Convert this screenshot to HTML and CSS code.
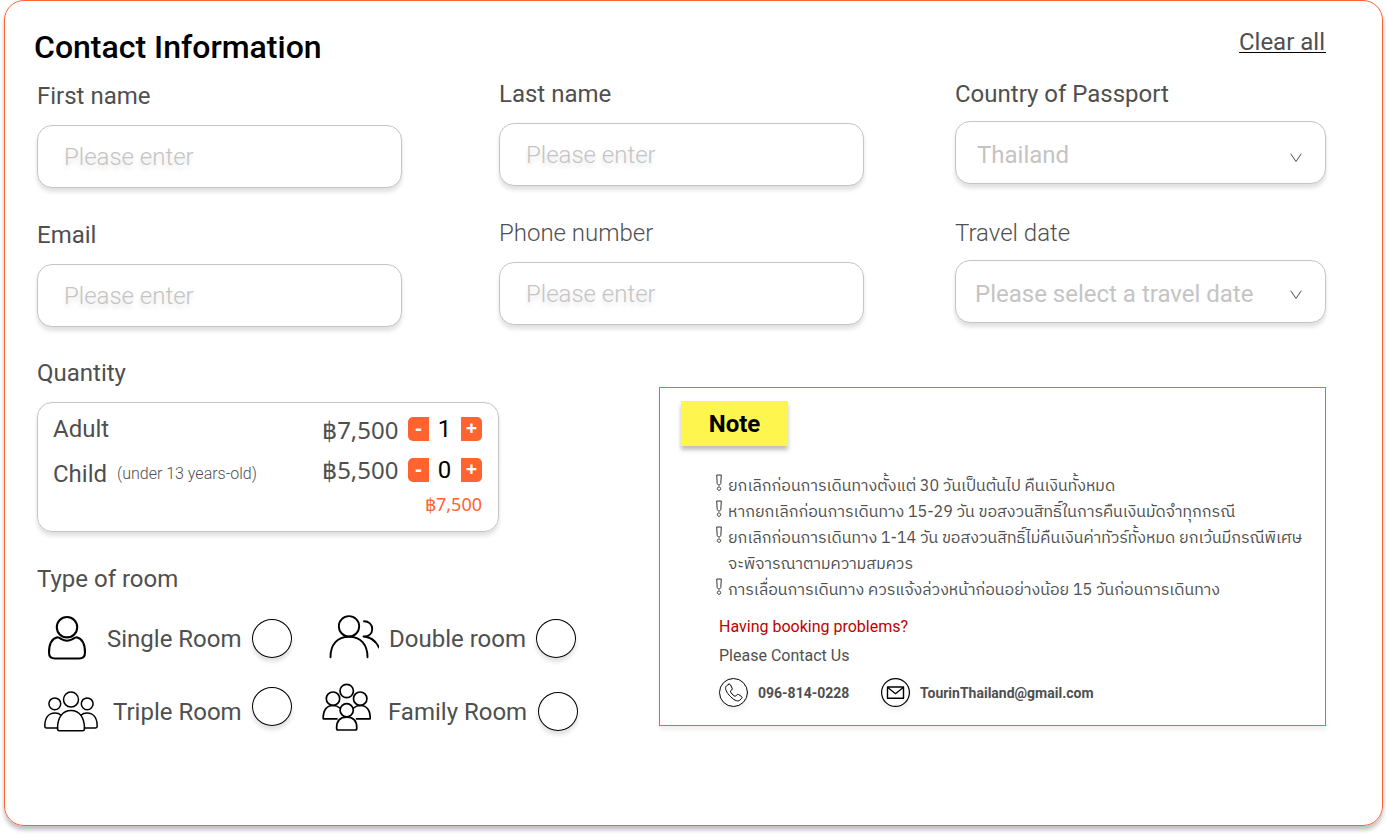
FILE: index.html
```html
<!DOCTYPE html>
<html lang="en">
<head>
<meta charset="utf-8">
<title>Contact Information</title>
<link rel="stylesheet" href="styles.css">
</head>
<body>
<main class="card">
  <header class="head">
    <h1 class="title">Contact Information</h1>
    <a class="clear">Clear all</a>
  </header>

  <section class="fields">
    <div class="col col-first">
      <div class="field"><span class="label">First name</span><div class="input"><span class="ph">Please enter</span></div></div>
      <div class="field"><span class="label">Email</span><div class="input"><span class="ph">Please enter</span></div></div>
    </div>
    <div class="col col-second">
      <div class="field"><span class="label">Last name</span><div class="input"><span class="ph">Please enter</span></div></div>
      <div class="field"><span class="label light">Phone number</span><div class="input"><span class="ph">Please enter</span></div></div>
    </div>
    <div class="col col-third">
      <div class="field"><span class="label">Country of Passport</span><div class="input select country"><span>Thailand</span><svg class="chev" viewBox="0 0 12 10"><path d="M.7.7 6 8.5 11.3.7"/></svg></div></div>
      <div class="field"><span class="label light">Travel date</span><div class="input select"><span>Please select a travel date</span><svg class="chev" viewBox="0 0 12 10"><path d="M.7.7 6 8.5 11.3.7"/></svg></div></div>
    </div>
  </section>

  <section class="lower">
    <div class="left">
      <span class="label">Quantity</span>
      <div class="quantity">
        <div class="qrow adult">
          <span class="who">Adult</span>
          <span class="price">฿7,500</span>
          <span class="btn minus">-</span><span class="num">1</span><span class="btn plus">+</span>
        </div>
        <div class="qrow child">
          <span class="who">Child</span><span class="age">(under 13 years-old)</span>
          <span class="price">฿5,500</span>
          <span class="btn minus">-</span><span class="num">0</span><span class="btn plus">+</span>
        </div>
        <div class="total">฿7,500</div>
      </div>

      <span class="label">Type of room</span>
      <div class="rooms">
        <div class="room single">
          <svg class="icon" width="42" height="46" viewBox="0 0 42 46"><g stroke-width="2.1"><circle cx="21" cy="12.2" r="10.2"/><path d="M11.500 22.200C6 23.500 3 29.500 3 37.500c0 4 2 6 6 6h24c4 0 6-2 6-6 0-8-3-14-8.500-15.300-1.500 0-2.500 1-4 2-3.500 2-7.500 2-11 0-1.500-1-2.500-2-4-2z"/></g></svg>
          <span class="name">Single Room</span><span class="radio"></span>
        </div>
        <div class="room double">
          <svg class="icon" width="51" height="46" viewBox="0 0 51 46"><g stroke-width="1.9"><circle cx="21" cy="12.300" r="10.200"/><path d="M2.500 43.300c0-13 7-20.500 18.500-20.500s18.500 7.500 18.500 20.500"/><path d="M36 7.200c4.800 0 8.200 3.300 8.200 7.700 0 4.600-3.400 7.600-8.700 7.600 8 .5 12.500 4.500 15.500 11"/></g></svg>
          <span class="name">Double room</span><span class="radio"></span>
        </div>
        <div class="room triple">
          <svg class="icon" width="54" height="44" viewBox="0 0 54 44"><g stroke-width="1.500"><circle cx="10.800" cy="13.800" r="5.900"/><circle cx="43.200" cy="13.800" r="5.900"/><circle cx="27" cy="9.600" r="7.500"/><path d="M13.700 38H2.500c-1 0-1.700-.6-1.700-1.700C.8 28 4.500 23 11 23c2.500 0 4.500.7 6 2.200"/><path d="M40.300 38h11.200c1 0 1.700-.6 1.700-1.700C53.200 28 49.500 23 43 23c-2.500 0-4.500.7-6 2.200"/><path d="M13.500 38.800c0-11.500 5-18.300 13.500-18.300s13.500 6.800 13.500 18.300c0 1.200-.8 2-2 2h-23c-1.200 0-2-.8-2-2z"/></g></svg>
          <span class="name">Triple Room</span><span class="radio"></span>
        </div>
        <div class="room family">
          <svg class="icon" width="50" height="50" viewBox="0 0 50 50"><g stroke-width="1.700"><circle cx="24.700" cy="8" r="6.700"/><circle cx="11" cy="15.700" r="6.700"/><circle cx="38.200" cy="15.700" r="6.700"/><circle cx="24.700" cy="27.300" r="6.600"/><path d="M15 35.800H1.200C1 27.500 4.500 22.500 11 22.500c2.800 0 5 .8 6.800 2.500"/><path d="M34.500 35.800h13.700c.2-8.300-3.300-13.300-9.800-13.300-2.800 0-5 .8-6.800 2.500"/><path d="M14.600 45c0-7 3.500-10.800 10.100-10.800S34.800 38 34.800 45c0 1.500-.3 2-1.500 2H16.100c-1.200 0-1.500-.5-1.500-2z"/></g></svg>
          <span class="name">Family Room</span><span class="radio"></span>
        </div>
      </div>
    </div>

    <aside class="note">
      <div class="badge">Note</div>
      <ul class="rules">
        <li><svg class="bang" viewBox="0 0 8 18"><path d="M1.700 1h4.600L5.800 9.500Q4 13 2.200 9.500zM4 12.900a1.700 1.700 0 1 0 .01 0z"/></svg><span>ยกเลิกก่อนการเดินทางตั้งแต่ 30 วันเป็นต้นไป คืนเงินทั้งหมด</span></li>
        <li><svg class="bang" viewBox="0 0 8 18"><path d="M1.700 1h4.600L5.800 9.500Q4 13 2.200 9.500zM4 12.900a1.700 1.700 0 1 0 .01 0z"/></svg><span>หากยกเลิกก่อนการเดินทาง 15-29 วัน ขอสงวนสิทธิ์ในการคืนเงินมัดจำทุกกรณี</span></li>
        <li><svg class="bang" viewBox="0 0 8 18"><path d="M1.700 1h4.600L5.800 9.500Q4 13 2.200 9.500zM4 12.900a1.700 1.700 0 1 0 .01 0z"/></svg><span>ยกเลิกก่อนการเดินทาง 1-14 วัน ขอสงวนสิทธิ์ไม่คืนเงินค่าทัวร์ทั้งหมด ยกเว้นมีกรณีพิเศษ</span></li>
        <li class="cont"><span>จะพิจารณาตามความสมควร</span></li>
        <li><svg class="bang" viewBox="0 0 8 18"><path d="M1.700 1h4.600L5.800 9.500Q4 13 2.200 9.500zM4 12.900a1.700 1.700 0 1 0 .01 0z"/></svg><span>การเลื่อนการเดินทาง ควรแจ้งล่วงหน้าก่อนอย่างน้อย 15 วันก่อนการเดินทาง</span></li>
      </ul>
      <div class="problems">Having booking problems?</div>
      <div class="please">Please Contact Us</div>
      <div class="contacts">
        <span class="disc"><svg class="icon" width="29" height="29" viewBox="0 0 29 29"><circle cx="14.500" cy="14.500" r="14" stroke-width="1"/><path stroke-width="1" d="M9.600 6.300 7.400 8c-1.700 1.600-.8 5 2.700 9.100 4 4.600 8.300 7 10.600 5.200l2-2c.5-.6.4-1.300-.2-1.800l-3-2c-.6-.4-1.300-.3-1.700.3l-1 1.200c-.5.400-1 .3-1.600-.1-1.500-1-2.700-2.300-3.600-3.900-.3-.6-.2-1.100.3-1.500l.9-.7c.6-.5.7-1 .3-1.700l-1.700-3.300c-.4-.8-1.100-1-1.800-.5z"/></svg></span>
        <span class="phone">096-814-0228</span>
        <span class="disc"><svg class="icon" width="29" height="29" viewBox="0 0 29 29"><circle cx="14.500" cy="14.500" r="13.900" stroke-width="1.200"/><rect x="6.500" y="9" width="16" height="11.300" stroke-width="1.400"/><path stroke-width="1.300" d="m6.800 9.500 7.700 6.200 7.700-6.200"/></svg></span>
        <span class="mail">TourinThailand@gmail.com</span>
      </div>
    </aside>
  </section>
</main>
</body>
</html>
```

FILE: styles.css
```css
* { box-sizing: border-box; }
body {
  margin: 0;
  min-height: 834px;
  background: #fff;
  font-family: Roboto, "Noto Sans", sans-serif;
  font-size: 24px;
  line-height: 28px;
  color: #4f4f4f;
}
.card {
  width: 1379px;
  height: 826px;
  margin-left: 4px;
  padding: 27px 56px 0 32px;
  border: 1px solid #ff6330;
  border-radius: 20px;
  box-shadow: 0 4px 4px rgba(0, 0, 0, .25);
}
.head { display: flex; justify-content: space-between; height: 52px; margin-left: -3px; }
.title { margin: 0; font-size: 32px; line-height: 38px; font-weight: 500; color: #000; white-space: nowrap; }
.clear { height: 25px; border-bottom: 1px solid #000; padding-right: 1px; }

.fields { display: flex; height: 248px; }
.col { display: flex; flex-direction: column; width: 365px; }
.col-first { padding-top: 2px; gap: 33px; }
.col-second { margin-left: 97px; gap: 33px; }
.col-third { margin-left: 91px; width: 371px; gap: 35px; }
.field { display: flex; flex-direction: column; gap: 15px; }
.col-third .field { gap: 13px; }
.label { display: block; height: 28px; white-space: nowrap; }
.light { font-weight: 300; }
.input {
  display: flex;
  align-items: center;
  height: 63px;
  padding-left: 26px;
  border: 1px solid #c4c4c4;
  border-radius: 15px;
  background: #fff;
  box-shadow: 0 4px 4px rgba(0, 0, 0, .12);
  color: #c4c4c4;
}
.ph { font-weight: 300; text-shadow: 0 4px 4px rgba(0, 0, 0, .12); }
.select { justify-content: space-between; padding: 5px 23px 0 19px; }
.country { padding-left: 21px; }
.chev { width: 12px; height: 10px; margin-top: 1px; fill: none; stroke: #4f4f4f; stroke-width: 1; }
.country .chev { margin-top: 5px; }

.lower { display: flex; justify-content: space-between; padding-top: 31px; }
.left { width: 560px; }
.quantity {
  width: 462px;
  height: 130px;
  margin: 15px 0 33px;
  padding: 12px 16px 0 15px;
  border: 1px solid #c4c4c4;
  border-radius: 15px;
  box-shadow: 0 4px 4px rgba(0, 0, 0, .12);
}
.qrow { display: flex; align-items: center; height: 28px; }
.child { margin-top: 13px; }
.child .who, .child .age { padding-top: 8px; }
.age { margin-left: 10px; font-size: 16px; font-weight: 300; }
.price { margin-left: auto; margin-right: 9.5px; font-family: "Noto Sans", sans-serif; }
.adult .price { padding-top: 2px; }
.btn {
  width: 21px;
  height: 24px;
  background: #ff6330;
  color: #fff;
  font-family: "Noto Sans", sans-serif;
  font-size: 20px;
  font-weight: 700;
  line-height: 21px;
  text-align: center;
}
.minus { border-radius: 5px 0 0 5px; }
.plus { border-radius: 0 5px 5px 0; }
.num { width: 32px; padding-right: 1px; text-align: center; color: #000; }
.total { margin-top: 6px; text-align: right; font-family: "Noto Sans", sans-serif; font-size: 18px; color: #ff6330; }

.rooms { display: grid; grid-template-columns: 285px 260px; padding-top: 17px; }
.room { display: flex; align-items: center; height: 58px; white-space: nowrap; }
.icon { flex: none; fill: none; stroke: #000; stroke-linecap: round; stroke-linejoin: round; }
.radio {
  flex: none;
  width: 40px;
  height: 39px;
  margin-top: -2px;
  border: 1px solid #000;
  border-radius: 50%;
  box-shadow: 0 4px 4px rgba(0, 0, 0, .12);
}
.single { padding-left: 9px; }
.single .icon { margin-top: -2px; }
.single .name { width: 145px; margin-left: 19px; }
.double { padding-left: 6px; }
.double .icon { margin-top: -4px; }
.double .name { width: 147px; margin-left: 10px; }
.triple, .family { height: 88px; }
.triple { padding-left: 7px; }
.triple .name { width: 139px; margin-left: 15px; }
.triple .radio { margin-top: -12px; }
.family .icon { margin-top: -9px; }
.family .name { width: 150px; margin-left: 16px; }

.note {
  width: 667px;
  height: 339px;
  margin-top: 28px;
  padding: 13px 20px 0 21px;
  border: 1px solid #ec633a;
  box-shadow: 0 4px 4px rgba(0, 0, 0, .06);
  font-size: 16px;
  white-space: nowrap;
}
.badge {
  width: 107px;
  height: 45px;
  background: #fff54f;
  box-shadow: 0 4px 4px rgba(0, 0, 0, .25);
  color: #000;
  font-size: 24px;
  font-weight: 700;
  line-height: 46px;
  text-align: center;
}
.rules { margin: 28px 0 0 33px; padding: 0; list-style: none; font-family: "IBM Plex Sans Thai", "Noto Sans Thai", "Noto Sans", sans-serif; }
.rules li { display: flex; height: 26px; line-height: 26px; }
.bang { flex: none; width: 8px; height: 18px; margin: -.5px 5.5px 0 .5px; fill: none; stroke: #333; stroke-width: 1; }
.cont { padding-left: 14px; }
.problems { margin: 9px 0 0 38px; color: #c00000; }
.please { margin: 1px 0 0 38px; }
.contacts { display: flex; align-items: center; height: 30px; margin: 7px 0 0 38px; font-size: 14px; font-weight: 700; }
.disc { width: 29px; height: 29px; border-radius: 50%; box-shadow: 0 4px 4px rgba(0, 0, 0, .06); }
.disc .icon { display: block; }
.phone { width: 123px; margin-left: 10px; padding-top: 2px; }
.mail { margin-left: 10px; padding-top: 2px; }
```
